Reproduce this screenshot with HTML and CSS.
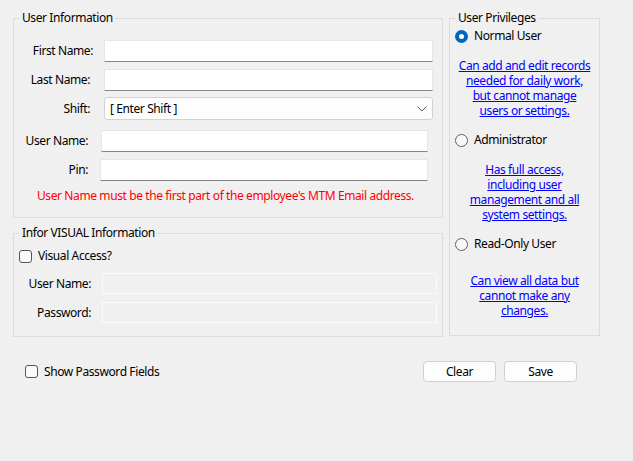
FILE: index.html
```html
<!DOCTYPE html>
<html>
<head>
<meta charset="utf-8">
<link rel="stylesheet" href="styles.css">
</head>
<body>
<div class="window">
  <div class="top">
    <div class="leftcol">
      <fieldset class="group g-user">
        <legend>User Information</legend>
        <div class="row r-first">
          <span class="lbl lbl-a lbl-wide">First Name:</span>
          <span class="tb tb-a"></span>
        </div>
        <div class="row r-last">
          <span class="lbl lbl-a">Last Name:</span>
          <span class="tb tb-a"></span>
        </div>
        <div class="row r-shift">
          <span class="lbl lbl-a">Shift:</span>
          <span class="combo">[ Enter Shift ]
            <svg class="chev" width="10" height="6" viewBox="0 0 10 6"><polyline points="0.5,0.5 5,5 9.5,0.5" fill="none" stroke="#5c5c5c" stroke-width="1"/></svg>
          </span>
        </div>
        <div class="row r-user">
          <span class="lbl lbl-b">User Name:</span>
          <span class="tb tb-b"></span>
        </div>
        <div class="row r-pin">
          <span class="lbl lbl-b">Pin:</span>
          <span class="tb tb-b tb-pin"></span>
        </div>
        <div class="warn">User Name must be the first part of the employee's MTM Email address.</div>
      </fieldset>
      <fieldset class="group g-visual">
        <legend>Infor VISUAL Information</legend>
        <div class="check-row"><span class="cb"></span><span>Visual Access?</span></div>
        <div class="row r-vuser">
          <span class="lbl lbl-c">User Name:</span>
          <span class="tb-dis"></span>
        </div>
        <div class="row r-vpass">
          <span class="lbl lbl-c">Password:</span>
          <span class="tb-dis"></span>
        </div>
      </fieldset>
    </div>
    <fieldset class="group g-priv">
      <legend>User Privileges</legend>
      <div class="radio-row r1"><span class="rb on"></span><span>Normal User</span></div>
      <div class="desc d1"><a href="#">Can add and edit records</a><br><a href="#">needed for daily work,</a><br><a href="#">but cannot manage</a><br><a href="#">users or settings.</a></div>
      <div class="radio-row r2"><span class="rb"></span><span>Administrator</span></div>
      <div class="desc d2"><a href="#">Has full access,</a><br><a href="#">including user</a><br><a href="#">management and all</a><br><a href="#">system settings.</a></div>
      <div class="radio-row r3"><span class="rb"></span><span>Read-Only User</span></div>
      <div class="desc d3"><a href="#">Can view all data but</a><br><a href="#">cannot make any</a><br><a href="#">changes.</a></div>
    </fieldset>
  </div>
  <div class="bottom">
    <div class="check-row show-pw"><span class="cb"></span><span>Show Password Fields</span></div>
    <div class="buttons">
      <button class="btn">Clear</button>
      <button class="btn">Save</button>
    </div>
  </div>
</div>
</body>
</html>
```

FILE: styles.css
```css
html, body {
  margin: 0;
  padding: 0;
  background: #f0f0f0;
}
body {
  font-family: "Noto Sans", "Open Sans", sans-serif;
  font-size: 12px;
  letter-spacing: -0.4px;
  color: #000;
  width: 633px;
  height: 461px;
  overflow: hidden;
}
.window {
  padding: 11px 0 0 13px;
}
.top {
  display: flex;
  align-items: flex-start;
}
.leftcol {
  width: 430px;
  flex: 0 0 430px;
  display: flex;
  flex-direction: column;
}
.group {
  margin: 0;
  padding: 0;
  border: 1px solid #dcdcdc;
  min-width: 0;
  box-sizing: border-box;
}
.group legend {
  margin-left: 6px;
  padding: 0 2px;
  line-height: 14px;
  height: 14px;
}
.g-user {
  padding-bottom: 14px;
}
.row {
  display: flex;
  align-items: center;
}
.lbl {
  text-align: right;
  white-space: nowrap;
  line-height: 14px;
}
.lbl-a { width: 76px; margin-right: 14px; }
.lbl-a.lbl-wide { width: 79px; margin-right: 11px; }
.lbl-b { width: 74px; margin-right: 13px; }
.lbl-c { width: 77px; margin-right: 11px; }

.tb {
  display: block;
  background: #fff;
  border: 1px solid #e6e6e6;
  border-bottom-color: #868686;
  box-sizing: border-box;
  height: 22px;
}
.tb-a { width: 329px; }
.tb-b { width: 327px; }
.tb-pin { margin-left: -1px; width: 328px; }

.r-first { margin-top: 15px; }
.r-last { margin-top: 7px; }
.r-shift { margin-top: 6px; }
.r-user { margin-top: 10px; }
.r-pin { margin-top: 7px; }

.combo {
  display: flex;
  align-items: center;
  justify-content: space-between;
  width: 329px;
  height: 23px;
  box-sizing: border-box;
  background: #fdfdfd;
  border: 1px solid #d2d2d2;
  border-radius: 3px;
  padding: 0 5px 0 5px;
  line-height: 14px;
}
.chev { display: block; }

.warn {
  color: #ff0000;
  margin-top: 8px;
  padding-left: 23px;
  line-height: 14px;
  white-space: nowrap;
}

.g-visual {
  margin-top: 8px;
  padding-bottom: 13px;
}
.check-row {
  display: flex;
  align-items: center;
  line-height: 14px;
}
.g-visual .check-row {
  margin-top: 9px;
  margin-left: 5px;
}
.cb {
  display: block;
  width: 13px;
  height: 13px;
  box-sizing: border-box;
  border: 1px solid #555;
  border-radius: 3px;
  background: #fbfbfb;
  margin-right: 6px;
}
.r-vuser { margin-top: 10px; }
.r-vpass { margin-top: 8px; }
.tb-dis {
  display: block;
  width: 335px;
  height: 21px;
  box-sizing: border-box;
  border: 1px solid #fbfbfb;
  background: #f0f0f0;
}

.g-priv {
  margin-left: 6px;
  width: 151px;
  flex: 0 0 151px;
  padding-bottom: 17px;
}
.radio-row {
  display: flex;
  align-items: center;
  margin-left: 5px;
  line-height: 14px;
}
.rb {
  display: block;
  width: 13px;
  height: 13px;
  box-sizing: border-box;
  border: 1px solid #5f5f5f;
  border-radius: 50%;
  background: #f8f8f8;
  margin-right: 6px;
}
.rb.on {
  border: 4px solid #0067c0;
  background: #fff;
}
.r1 { margin-top: 4px; }
.r2 { margin-top: 15px; }
.r3 { margin-top: 15px; }
.desc {
  text-align: center;
  line-height: 15px;
  white-space: nowrap;
}
.desc a {
  color: #0000ff;
  text-decoration: underline;
}
.d1 { margin-top: 15px; }
.d2 { margin-top: 15px; }
.d3 { margin-top: 22px; }

.bottom {
  display: flex;
  align-items: center;
  margin-top: 24px;
  height: 21px;
  width: 564px;
}
.show-pw {
  margin-left: 12px;
}
.buttons {
  margin-left: auto;
  display: flex;
  gap: 8px;
}
.btn {
  width: 73px;
  height: 21px;
  box-sizing: border-box;
  border: 1px solid #d0d0d0;
  border-radius: 4px;
  background: #fdfdfd;
  font-family: inherit;
  font-size: 12px;
  letter-spacing: inherit;
  color: #000;
  padding: 0;
  line-height: 14px;
}
```
